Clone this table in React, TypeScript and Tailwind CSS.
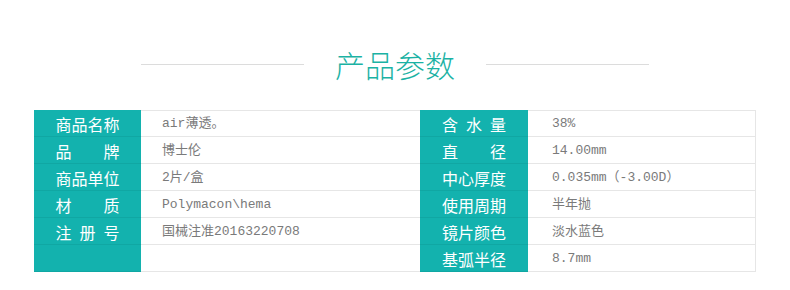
const leftRows = [
  ["商品名称", "air薄透。"],
  ["品牌", "博士伦"],
  ["商品单位", "2片/盒"],
  ["材质", "Polymacon\\hema"],
  ["注册号", "国械注准20163220708"],
  ["", ""],
];

const rightRows = [
  ["含水量", "38%"],
  ["直径", "14.00mm"],
  ["中心厚度", "0.035mm（-3.00D）"],
  ["使用周期", "半年抛"],
  ["镜片颜色", "淡水蓝色"],
  ["基弧半径", "8.7mm"],
];

function Row({
  label,
  value,
  first,
  labelW,
  valueW,
  pad,
  right,
}: {
  label: string;
  value: string;
  first: boolean;
  labelW: string;
  valueW: string;
  pad: string;
  right?: boolean;
}) {
  return (
    <div className="flex h-[27px]">
      <div
        className={`${labelW} flex items-center justify-center border-b border-[#10a7a3] bg-[#13b2ae]`}
      >
        <span className="block w-[64px] pt-px text-[16px] leading-none font-normal text-white [text-align-last:justify]">
          {label}
        </span>
      </div>
      <div
        className={`${valueW} ${pad} flex items-center border-b border-[#e6e6e6] pt-px ${
          first ? "border-t" : ""
        } ${right ? "border-r" : ""} text-[13px] text-[#7a7a7a]`}
        style={{ fontFamily: '"Liberation Mono", "Noto Sans CJK SC", monospace' }}
      >
        {value}
      </div>
    </div>
  );
}

export default function App() {
  return (
    <div
      className="h-[290px] w-[790px] bg-white"
      style={{ fontFamily: '"Noto Sans CJK SC", sans-serif' }}
    >
      <div className="flex h-[110px] items-start justify-center pt-[46px]">
        <div className="flex h-9 items-center gap-[31px]">
          <div className="h-px w-[163px] bg-[#dcdcdc]" />
          <span className="text-[30px] leading-none font-light text-[#1bb2a4]">产品参数</span>
          <div className="h-px w-[163px] bg-[#dcdcdc]" />
        </div>
      </div>
      <div className="ml-[34px] flex w-[722px]">
        <div className="flex w-[386px] flex-col">
          {leftRows.map(([l, v], i) => (
            <Row
              key={i}
              label={l}
              value={v}
              first={i === 0}
              labelW="w-[107px]"
              valueW="w-[279px]"
              pad="pl-[21px]"
            />
          ))}
        </div>
        <div className="flex w-[336px] flex-col">
          {rightRows.map(([l, v], i) => (
            <Row
              key={i}
              label={l}
              value={v}
              first={i === 0}
              labelW="w-[108px]"
              valueW="w-[228px]"
              pad="pl-[24px]"
              right
            />
          ))}
        </div>
      </div>
    </div>
  );
}
